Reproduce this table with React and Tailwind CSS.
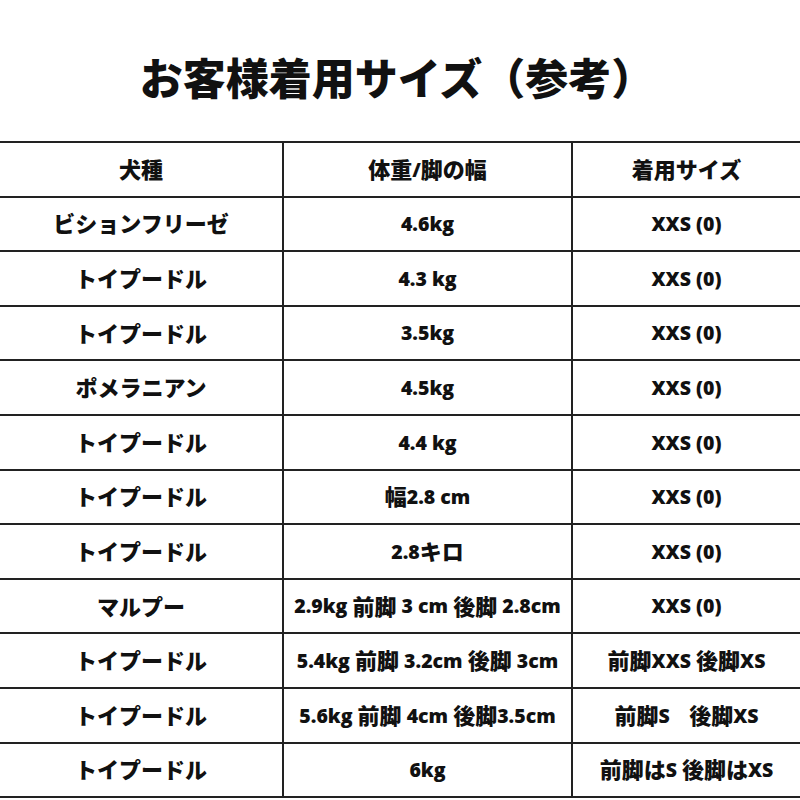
import React from 'react'

const rows = [
  ['ビションフリーゼ', '4.6kg', 'XXS (0)'],
  ['トイプードル', '4.3 kg', 'XXS (0)'],
  ['トイプードル', '3.5kg', 'XXS (0)'],
  ['ポメラニアン', '4.5kg', 'XXS (0)'],
  ['トイプードル', '4.4 kg', 'XXS (0)'],
  ['トイプードル', '幅2.8 cm', 'XXS (0)'],
  ['トイプードル', '2.8キロ', 'XXS (0)'],
  ['マルプー', '2.9kg 前脚 3 cm 後脚 2.8cm', 'XXS (0)'],
  ['トイプードル', '5.4kg 前脚 3.2cm 後脚 3cm', '前脚XXS 後脚XS'],
  ['トイプードル', '5.6kg 前脚 4cm 後脚3.5cm', '前脚S\u3000後脚XS'],
  ['トイプードル', '6kg', '前脚はS 後脚はXS'],
]

// Japanese runs are set a touch larger and heavier than the latin text
const Mixed = ({ text }) =>
  text.split(/([\u3040-\u30ff\u4e00-\u9fff]+)/).map((part, i) =>
    /[\u3040-\u30ff\u4e00-\u9fff]/.test(part) ? (
      <span key={i} className="text-[22px] font-black">{part}</span>
    ) : (
      <span key={i}>{part}</span>
    )
  )

const Row = ({ cells }) => (
  <div className="grid grid-cols-[284px_289px_1fr] h-[54.6px] border-b-2 border-[#222]">
    <div className="flex items-center justify-center border-r-2 border-[#222] whitespace-pre"><Mixed text={cells[0]} /></div>
    <div className="flex items-center justify-center border-r-2 border-[#222] whitespace-pre"><Mixed text={cells[1]} /></div>
    <div className="flex items-center justify-center whitespace-pre"><Mixed text={cells[2]} /></div>
  </div>
)

export default function App() {
  return (
    <div className="w-[800px] h-[800px] bg-white overflow-hidden text-[#111] font-['Open_Sans','Noto_Sans_CJK_JP',sans-serif]">
      <h1 className="h-[141px] pt-[18px] flex items-center justify-center text-[43px] font-black pr-[6px]">
        お客様着用サイズ（参考）
      </h1>
      <div className="border-t-2 border-[#222] text-[19.5px] font-extrabold">
        <Row cells={['犬種', '体重/脚の幅', '着用サイズ']} />
        {rows.map((r, i) => (
          <Row key={i} cells={r} />
        ))}
      </div>
    </div>
  )
}
